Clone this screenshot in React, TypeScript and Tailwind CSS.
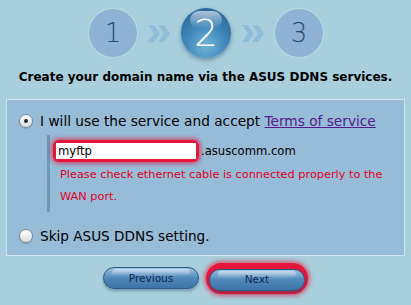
import { useState } from 'react';

function StepCircle({ n, active }: { n: number; active?: boolean }) {
  if (active) {
    return (
      <div className="relative w-[50px] h-[50px] rounded-full flex items-center justify-center bg-[radial-gradient(circle_at_50%_75%,#6fb6da_0%,#3f86b9_45%,#1f5a8c_100%)] shadow-[0_2px_4px_rgba(30,70,110,0.5)]">
        <div className="absolute top-[3px] left-[9px] w-[32px] h-[18px] rounded-full bg-gradient-to-b from-white/60 to-white/0" />
        <span className="relative text-[37px] leading-none text-white font-['DejaVu_Sans',sans-serif] font-light">{n}</span>
      </div>
    );
  }
  return (
    <div className="w-[48px] h-[48px] rounded-full flex items-center justify-center bg-[radial-gradient(circle,#8eb0d4_0%,#8fb2d5_72%,#e6f0f6_100%)] shadow-[0_0_2px_rgba(255,255,255,0.8)]">
      <span className="text-[26px] leading-none text-[#2c4a6e] font-['DejaVu_Sans',sans-serif] font-light">{n}</span>
    </div>
  );
}

function Chevrons() {
  return (
    <svg width="22" height="17" viewBox="0 0 22 17">
      <path d="M0 0 H6 L12 8.5 L6 17 H0 L6 8.5 Z" fill="#8fbcd8" />
      <path d="M10 0 H16 L22 8.5 L16 17 H10 L16 8.5 Z" fill="#8fbcd8" />
    </svg>
  );
}

function Radio({ checked, onClick }: { checked: boolean; onClick: () => void }) {
  return (
    <button
      onClick={onClick}
      className="w-[14px] h-[14px] rounded-full border border-[#7d8a96] bg-gradient-to-b from-white to-[#d9dde2] flex items-center justify-center shadow-[0_1px_1px_rgba(0,0,0,0.15)]"
    >
      {checked && <span className="w-[4px] h-[4px] rounded-full bg-[#1b2b3d]" />}
    </button>
  );
}

function PillButton({ label, glow }: { label: string; glow?: boolean }) {
  const btn = (
    <button className="relative w-[96px] h-[22px] rounded-full border border-[#2d5b86] bg-gradient-to-b from-[#9cc3e2] via-[#4f88b9] to-[#3d73a6] shadow-[0_2px_3px_rgba(40,70,100,0.4)] text-[10.5px] text-[#0f2752] font-['DejaVu_Sans',sans-serif]">
      <span className="absolute left-[8px] right-[8px] top-[1px] h-[7px] rounded-full bg-gradient-to-b from-white/50 to-white/0" />
      <span className="relative">{label}</span>
    </button>
  );
  if (!glow) return btn;
  return (
    <div className="rounded-full p-[3px] bg-[#e4173b] shadow-[0_0_4px_2px_rgba(230,20,60,0.6)]">{btn}</div>
  );
}

export default function App() {
  const [useDdns, setUseDdns] = useState(true);
  const [host, setHost] = useState('myftp');

  return (
    <div className="w-[411px] h-[305px] bg-[#a9cfdc] font-['DejaVu_Sans',sans-serif] text-black overflow-hidden">
      {/* Steps */}
      <div className="flex items-center justify-center gap-[11px] pt-[8px] pl-[1px]">
        <StepCircle n={1} />
        <Chevrons />
        <StepCircle n={2} active />
        <Chevrons />
        <StepCircle n={3} />
      </div>

      <h1 className="mt-[11px] text-center text-[12px] font-bold leading-[16px]">
        Create your domain name via the ASUS DDNS services.
      </h1>

      {/* Panel */}
      <div className="mx-[6px] mt-[14px] h-[157px] border border-[#cfe4ee] bg-[#97bcd8]">
        <div className="flex items-center gap-[7px] pl-[12px] pt-[13px] text-[13.7px] leading-[16px]">
          <Radio checked={useDdns} onClick={() => setUseDdns(true)} />
          <span>
            I will use the service and accept{' '}
            <a href="#" className="text-[#551a8b] underline">Terms of service</a>
          </span>
        </div>

        <div className="ml-[40px] mt-[6px] border-l-[3px] border-[#6d98ba] pl-[3px] pt-[5px] pb-[4px] w-fit">
          <div className="flex items-center">
            <div className="rounded-[6px] p-[3px] bg-[#e4173b] shadow-[0_0_4px_2px_rgba(230,20,60,0.6)]">
              <input
                value={host}
                onChange={(e) => setHost(e.target.value)}
                className="block w-[140px] h-[16px] bg-white px-[2px] text-[11.6px] leading-[16px] text-black outline-none font-['DejaVu_Sans',sans-serif]"
              />
            </div>
            <span className="text-[11.6px] leading-[16px] ml-[2px]">.asuscomm.com</span>
          </div>
          <p className="mt-[2px] pl-[7px] pr-[10px] text-[11.3px] leading-[22px] text-[#e0001e] w-[350px]">
            Please check ethernet cable is connected properly to the WAN port.
          </p>
        </div>

        <div className="flex items-center gap-[7px] pl-[12px] mt-[16px] text-[13.6px] leading-[16px]">
          <Radio checked={!useDdns} onClick={() => setUseDdns(false)} />
          <span>Skip ASUS DDNS setting.</span>
        </div>
      </div>

      {/* Buttons */}
      <div className="flex items-center justify-center gap-[7px] mt-[7px]">
        <PillButton label="Previous" />
        <PillButton label="Next" glow />
      </div>
    </div>
  );
}
